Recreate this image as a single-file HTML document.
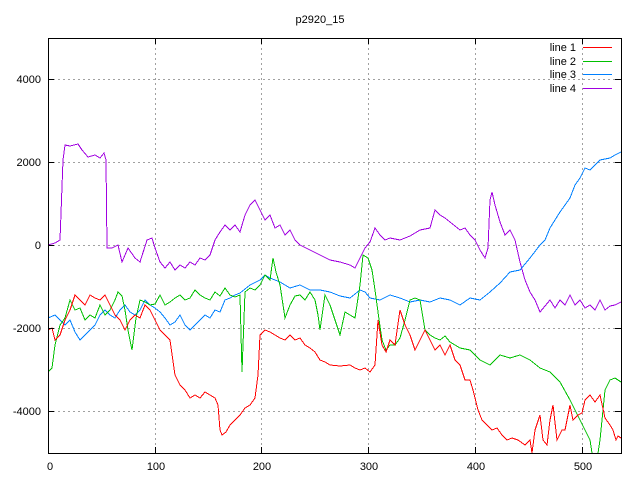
<!DOCTYPE html>
<html><head><meta charset="utf-8"><style>
html,body{margin:0;padding:0;background:#fff;width:640px;height:480px;overflow:hidden}
text{font-family:"Liberation Sans",sans-serif;font-size:11px;fill:#000}
</style></head><body>
<svg width="640" height="480" xmlns="http://www.w3.org/2000/svg">
<rect width="640" height="480" fill="#fff"/>
<text x="320" y="23" text-anchor="middle">p2920_15</text>
<g stroke="#a0a0a0" stroke-width="1" stroke-dasharray="2,3" fill="none" shape-rendering="crispEdges">
<line x1="48" y1="79.5" x2="621" y2="79.5"/>
<line x1="48" y1="162.5" x2="621" y2="162.5"/>
<line x1="48" y1="245.5" x2="621" y2="245.5"/>
<line x1="48" y1="328.5" x2="621" y2="328.5"/>
<line x1="48" y1="411.5" x2="621" y2="411.5"/>
<line x1="155.5" y1="38" x2="155.5" y2="453"/>
<line x1="261.5" y1="38" x2="261.5" y2="453"/>
<line x1="368.5" y1="38" x2="368.5" y2="453"/>
<line x1="475.5" y1="38" x2="475.5" y2="453"/>
<line x1="582.5" y1="38" x2="582.5" y2="453"/>
</g>
<g text-anchor="end">
<text x="41" y="83">4000</text>
<text x="41" y="166">2000</text>
<text x="41" y="249">0</text>
<text x="41" y="332">-2000</text>
<text x="41" y="415">-4000</text>
</g>
<g fill="none" stroke-width="1" stroke-linejoin="miter" shape-rendering="crispEdges">
<polyline stroke="#a000e0" points="48,245 55,243 60,240 63,160 65,145 70,146 78,144 82,150 88,157 95,155 100,158 104,153 106,160 107,248 112,248 118,245 122,262 128,248 135,258 140,262 147,240 152,238 155,248 160,262 165,268 170,262 175,270 180,265 185,268 190,262 195,265 200,258 205,260 210,255 215,240 220,232 225,225 230,230 235,225 240,232 245,215 250,205 255,200 260,210 265,220 270,215 275,228 280,225 285,235 290,230 295,240 300,245 310,250 320,255 330,260 340,262 350,265 355,268 360,258 365,248 370,242 375,228 380,235 385,240 390,238 400,240 410,236 420,230 430,228 435,210 440,215 445,218 450,222 455,226 460,230 465,228 470,235 475,240 480,250 485,258 488,248 490,200 492,192 495,205 500,222 505,235 510,230 515,240 520,262 525,280 530,292 535,300 540,312 545,306 550,300 555,308 560,300 565,305 570,295 575,305 580,300 585,308 590,305 595,310 600,300 605,310 610,306 615,305 621,302"/>
<polyline stroke="#0080ff" points="48,318 55,315 60,320 65,325 70,320 75,332 80,340 85,335 90,330 95,325 100,315 105,310 110,315 115,318 120,310 125,305 130,312 135,315 140,310 145,300 150,305 155,308 160,312 165,318 170,325 175,322 180,315 185,325 190,330 195,325 200,320 205,315 210,318 215,310 220,312 225,300 230,298 235,295 240,293 250,285 260,280 265,275 270,278 280,282 285,285 290,288 300,285 310,290 320,290 330,292 340,296 350,298 360,290 365,292 370,298 380,300 390,295 400,298 410,302 420,300 430,302 440,298 450,300 460,305 470,298 480,300 490,292 500,283 510,272 520,270 530,258 540,245 545,240 550,228 560,212 570,198 575,185 580,178 585,168 590,170 600,160 610,158 615,155 621,152"/>
<polyline stroke="#00c000" points="48,372 52,368 55,345 60,325 65,318 70,300 75,310 80,308 85,320 90,315 95,318 100,305 105,315 110,310 115,300 118,292 122,296 125,310 128,330 132,350 136,318 140,300 145,302 150,305 155,304 160,295 165,305 170,302 175,298 180,295 185,300 190,298 195,290 200,295 205,298 210,300 215,292 220,296 225,288 230,295 235,297 240,295 242,372 245,292 250,288 255,290 260,285 265,275 270,280 273,258 276,272 280,285 285,318 290,305 295,296 300,295 305,300 310,292 315,300 318,315 320,330 325,295 330,305 335,320 340,335 345,312 350,315 355,318 360,285 363,255 368,258 372,270 375,290 378,312 382,340 386,350 390,345 395,345 400,338 405,320 410,300 415,298 420,300 425,330 430,335 435,338 440,340 445,336 450,342 455,345 460,348 470,350 480,360 490,365 500,355 510,358 520,355 530,360 540,368 550,372 560,382 570,400 575,410 580,420 585,430 590,440 592,453"/>
<polyline stroke="#00c000" points="598,453 600,440 605,390 610,380 615,378 621,382"/>
<polyline stroke="#ff0000" points="48,330 52,328 55,340 60,335 65,320 70,310 75,295 80,300 85,305 90,295 95,298 100,300 105,295 110,305 115,315 120,320 125,330 130,320 135,315 140,318 145,305 150,310 155,320 160,330 165,335 170,340 175,375 180,385 185,390 190,398 195,395 200,398 205,392 210,395 215,398 218,405 220,430 222,435 226,432 230,425 235,420 240,415 245,408 250,405 255,398 258,375 260,335 265,330 270,332 275,335 280,338 285,340 290,335 295,340 300,338 305,345 310,348 315,352 320,360 325,362 330,365 340,366 350,365 355,368 360,370 365,368 370,372 375,365 378,320 382,345 386,352 390,340 395,345 400,310 405,325 410,335 415,350 420,340 425,330 430,340 435,350 440,345 445,355 450,345 455,360 460,365 465,380 470,380 473,390 478,410 482,420 487,425 492,430 497,428 502,435 507,440 512,438 518,440 525,445 530,440 532,453 535,430 540,415 543,440 547,445 550,420 553,405 557,440 562,430 565,430 570,405 573,420 578,415 582,413 585,400 590,395 595,402 600,395 605,418 610,425 613,430 616,440 618,436 621,438"/>
</g>
<rect x="0" y="454" width="640" height="26" fill="#fff"/>
<g text-anchor="middle">
<text x="50" y="470">0</text>
<text x="156" y="470">100</text>
<text x="262" y="470">200</text>
<text x="369" y="470">300</text>
<text x="476" y="470">400</text>
<text x="583" y="470">500</text>
</g>
<g text-anchor="end">
<text x="576" y="51">line 1</text>
<text x="576" y="65">line 2</text>
<text x="576" y="78">line 3</text>
<text x="576" y="92">line 4</text>
</g>
<rect x="583" y="47" width="29" height="1" fill="#ff0000"/>
<rect x="583" y="61" width="29" height="1" fill="#00c000"/>
<rect x="583" y="74" width="29" height="1" fill="#0080ff"/>
<rect x="583" y="88" width="29" height="1" fill="#a000e0"/>
<g stroke="#000" shape-rendering="crispEdges">
<rect x="48.5" y="38.5" width="573" height="415" fill="none"/>
<line x1="48" y1="79.5" x2="54" y2="79.5"/><line x1="615" y1="79.5" x2="621" y2="79.5"/>
<line x1="48" y1="162.5" x2="54" y2="162.5"/><line x1="615" y1="162.5" x2="621" y2="162.5"/>
<line x1="48" y1="245.5" x2="54" y2="245.5"/><line x1="615" y1="245.5" x2="621" y2="245.5"/>
<line x1="48" y1="328.5" x2="54" y2="328.5"/><line x1="615" y1="328.5" x2="621" y2="328.5"/>
<line x1="48" y1="411.5" x2="54" y2="411.5"/><line x1="615" y1="411.5" x2="621" y2="411.5"/>
<line x1="155.5" y1="38" x2="155.5" y2="44"/><line x1="155.5" y1="447" x2="155.5" y2="453"/>
<line x1="261.5" y1="38" x2="261.5" y2="44"/><line x1="261.5" y1="447" x2="261.5" y2="453"/>
<line x1="368.5" y1="38" x2="368.5" y2="44"/><line x1="368.5" y1="447" x2="368.5" y2="453"/>
<line x1="475.5" y1="38" x2="475.5" y2="44"/><line x1="475.5" y1="447" x2="475.5" y2="453"/>
<line x1="582.5" y1="38" x2="582.5" y2="44"/><line x1="582.5" y1="447" x2="582.5" y2="453"/>
</g>
</svg>
</body></html>
